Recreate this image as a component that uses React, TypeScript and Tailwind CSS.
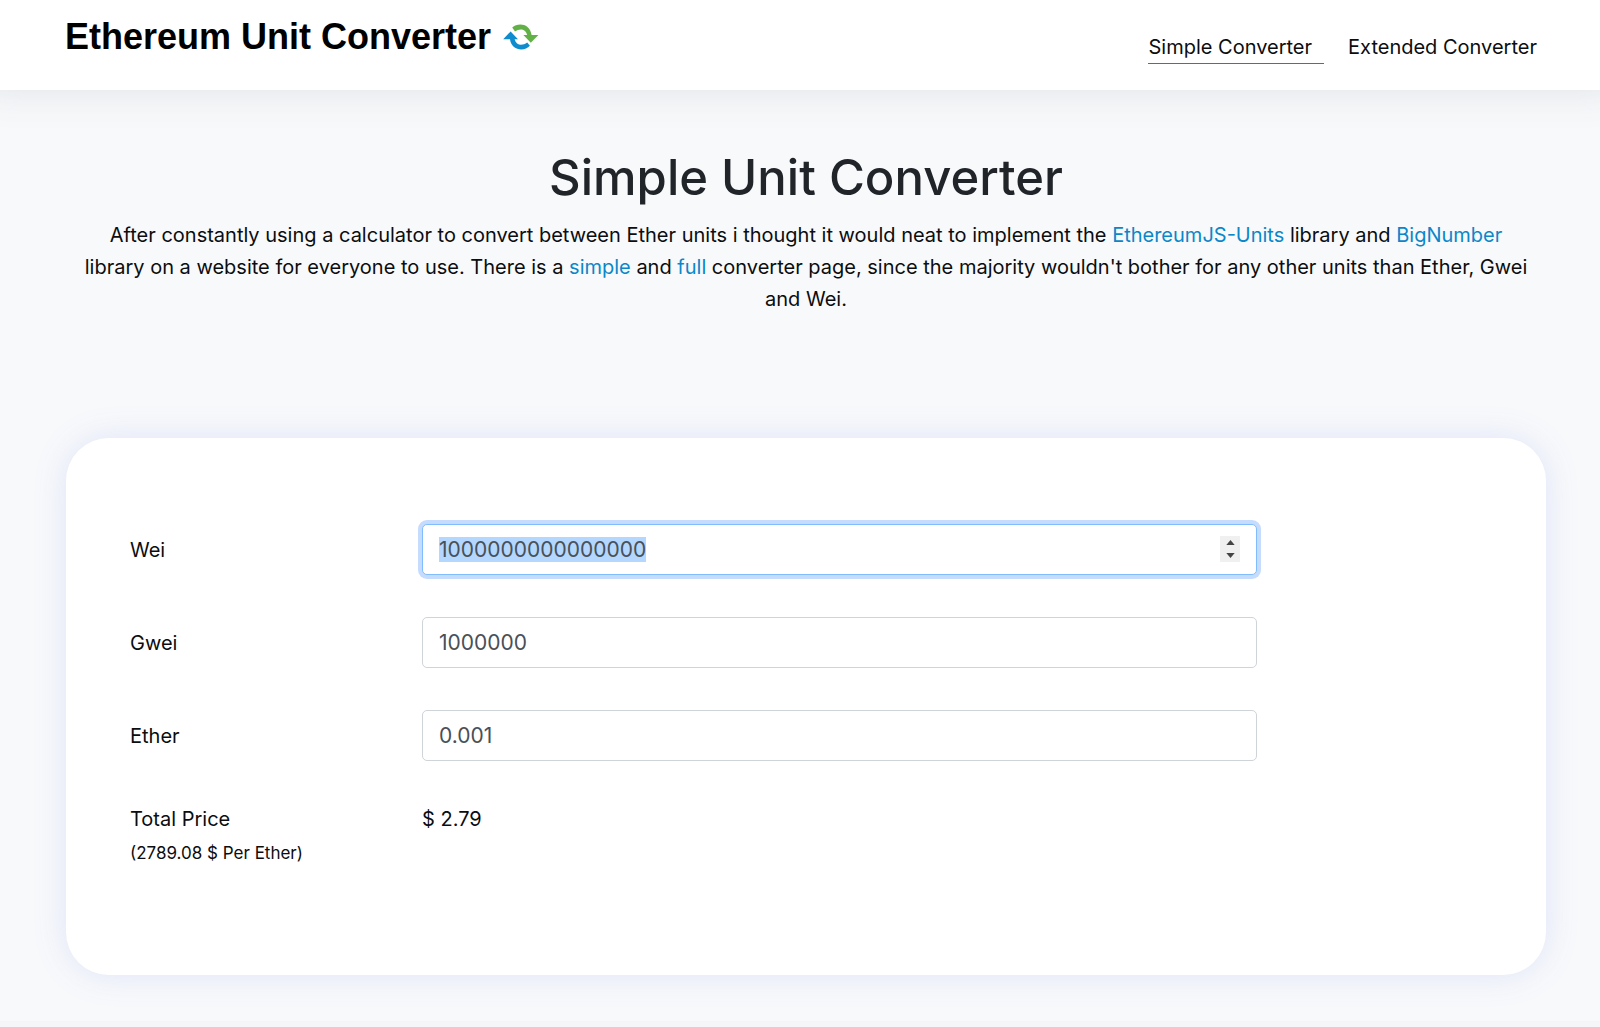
import { useEffect, useRef, useState } from 'react';

const ETHER_PRICE = 2789.08;

const linkClass = 'text-[#0b87c9] hover:underline';

const inputClass =
  'h-[51px] w-full rounded-[5px] border border-[#ced4da] bg-white px-4 text-[21px] text-[#495057] outline-none [appearance:textfield] selection:bg-[#b3d7fe] selection:text-[#495057] focus:border-[#80bdff] focus:ring-4 focus:ring-[#c5dcff] [&::-webkit-inner-spin-button]:appearance-none';

const ConvertIcon = () => (
  <svg viewBox="0 0 36 26" className="h-[26px] w-9" aria-hidden="true">
    <path d="M9.2 3.6C14.5-1.6 27-1 28.6 11H35.4L27.8 18.8L20.4 11H24.2C22.4 4.4 16.5 4.2 12 7.4Z" fill="#62b146" />
    <path d="M26.9 21.8C21.5 27.8 8.4 26.8 7 15.2H.2L7.6 7.4L15 15.2H11.6C13.4 21.6 19.2 22 24.2 18.4Z" fill="#0f8ccd" />
  </svg>
);

const Header = () => (
  <header className="relative flex h-[90px] items-start justify-between bg-white pl-[65px] pr-[63px] pt-[15px] shadow-[0_-18px_38px_20px_rgba(60,85,100,0.12)]">
    <div className="flex items-center gap-3">
      <span className="font-['Liberation_Sans',sans-serif] text-[36px] font-bold leading-[44px] text-black">Ethereum Unit Converter</span>
      <ConvertIcon />
    </div>
    <nav className="flex gap-6 pt-[17px] leading-[31px]">
      <a href="#simple" className="border-b border-[#0b87c9] pr-3">Simple Converter</a>
      <a href="#extended">Extended Converter</a>
    </nav>
  </header>
);

interface UnitRowProps {
  id: string;
  label: string;
  value: string;
  onChange: (value: string) => void;
  active?: boolean;
}

const UnitRow = ({ id, label, value, onChange, active }: UnitRowProps) => {
  const inputRef = useRef<HTMLInputElement>(null);

  // Start with the first unit focused and ready to be replaced
  useEffect(() => {
    if (active) {
      inputRef.current?.focus();
      inputRef.current?.select();
    }
  }, [active]);

  const step = (amount: number) => onChange(String(Number(value) + amount));

  return (
    <div className="grid grid-cols-[292px_minmax(0,835px)] items-center">
      <label htmlFor={id}>{label}</label>
      <div className="relative">
        <input
          ref={inputRef}
          id={id}
          type="number"
          value={value}
          onChange={(e) => onChange(e.target.value)}
          className={inputClass}
        />
        {active && (
          <div className="absolute right-[17px] top-3 flex h-[26px] w-5 flex-col bg-[#f0f0f0]">
            <button type="button" aria-label="Increase" onClick={() => step(1)} className="flex flex-1 items-end justify-center pb-1">
              <svg viewBox="0 0 10 6" className="h-[5px] w-[9px]"><path d="M5 0L10 6H0Z" fill="#444" /></svg>
            </button>
            <button type="button" aria-label="Decrease" onClick={() => step(-1)} className="flex flex-1 items-start justify-center pt-1">
              <svg viewBox="0 0 10 6" className="h-[5px] w-[9px]"><path d="M5 6L0 0H10Z" fill="#444" /></svg>
            </button>
          </div>
        )}
      </div>
    </div>
  );
};

export default function App() {
  const [wei, setWei] = useState('1000000000000000');
  const [gwei, setGwei] = useState('1000000');
  const [ether, setEther] = useState('0.001');

  const changeWei = (value: string) => {
    setWei(value);
    setGwei(String(Number(value) / 1e9));
    setEther(String(Number(value) / 1e18));
  };

  const changeGwei = (value: string) => {
    setWei(String(Number(value) * 1e9));
    setGwei(value);
    setEther(String(Number(value) / 1e9));
  };

  const changeEther = (value: string) => {
    setWei(String(Number(value) * 1e18));
    setGwei(String(Number(value) * 1e9));
    setEther(value);
  };

  return (
    <div className="flex min-h-screen flex-col bg-[#f8f9fb] font-['Inter',sans-serif] text-[20px] leading-8 text-[#0b0d0f]">
      <Header />
      <main className="flex-1 pb-[46px] pl-[66px] pr-[54px] pt-[56px]">
        <section className="text-center">
          <h1 className="text-[49px] font-medium leading-[64px] text-[#212529]">Simple Unit Converter</h1>
          <p className="px-4 pt-[9px]">
            After constantly using a calculator to convert between Ether units i thought it would neat to implement the{' '}
            <a href="#ethereumjs-units" className={linkClass}>EthereumJS-Units</a> library and{' '}
            <a href="#bignumber" className={linkClass}>BigNumber</a> library on a website for everyone to use. There is a{' '}
            <a href="#simple" className={linkClass}>simple</a> and{' '}
            <a href="#extended" className={linkClass}>full</a> converter page, since the majority wouldn't bother for any other units than Ether, Gwei and Wei.
          </p>
        </section>

        <section className="mt-[123px] flex min-h-[537px] flex-col gap-[42px] rounded-[43px] bg-white px-16 pt-[86px] shadow-[0_0_34px_rgba(80,115,230,0.15)]">
          <UnitRow id="wei" label="Wei" value={wei} onChange={changeWei} active />
          <UnitRow id="gwei" label="Gwei" value={gwei} onChange={changeGwei} />
          <UnitRow id="ether" label="Ether" value={ether} onChange={changeEther} />
          <div className="grid grid-cols-[292px_minmax(0,835px)]">
            <div>
              <div>Total Price</div>
              <div className="pt-0.5 text-[17px]">({ETHER_PRICE} $ Per Ether)</div>
            </div>
            <div>$ {(Number(ether) * ETHER_PRICE).toFixed(2)}</div>
          </div>
        </section>
      </main>
      <footer className="h-1.5 bg-[#f5f6f8]" />
    </div>
  );
}
